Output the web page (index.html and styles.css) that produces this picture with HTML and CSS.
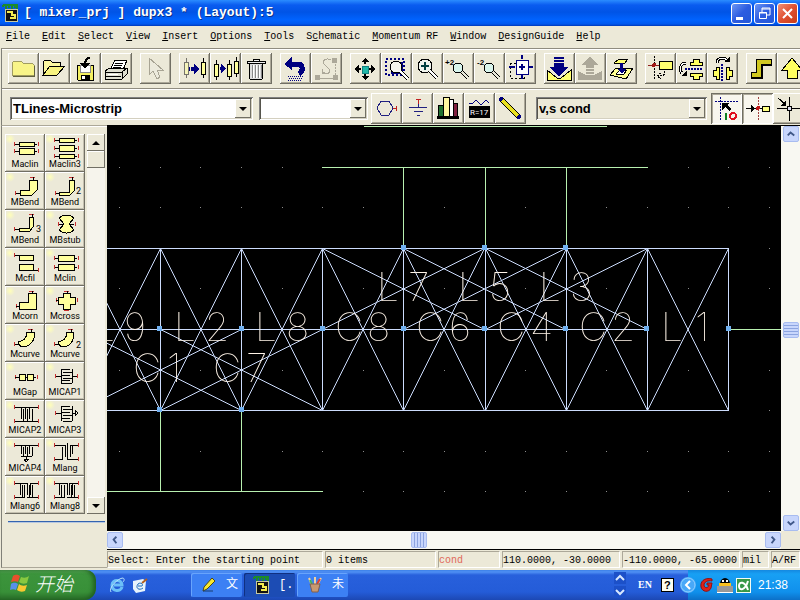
FILE: index.html
```html
<!DOCTYPE html>
<html lang="en">
<head>
<meta charset="utf-8">
<title>[ mixer_prj ] dupx3 * (Layout):5</title>
<link rel="stylesheet" href="styles.css">
</head>
<body>
<svg class="defs" aria-hidden="true">
  <defs>
    <g id="app">
      <path d="M1 1h15M1 1v2M4 1v4M7 1v3M10 1v4M13 1v3M15 1v4" stroke="#1c8a2c" stroke-width="2"/>
      <path d="M3 5h12v12H3z" fill="#111" stroke="#c8c8a0"/>
      <path d="M5 8h5v3h3v3H8" fill="none" stroke="#f4ec50" stroke-width="2"/>
    </g>
    <g id="part"><path d="M2 0v4M2 16v4" stroke="#000"/><path d="M0 4h4v12H0z" fill="#ffff9c" stroke="#000"/></g>
    <g id="lens"><circle cx="15" cy="15" r="5" fill="#d8f4ec" stroke="#000"/><path d="M19 19l6 6" stroke="#000" stroke-width="4"/><path d="M19 19l6 6" stroke="#e8e8d8" stroke-width="2"/></g>
    <g id="cross2"><path d="M0 0l81 162M0 162L81 0M0 0v162"/></g>
    <g id="wide"><path d="M0 0l162 81M0 81L162 0"/></g>
    <path id="dots" d="M119 0h1M160 0h1M200 0h1M241 0h1M282 0h1M322 0h1M363 0h1M403 0h1M444 0h1M485 0h1M525 0h1M566 0h1M606 0h1M647 0h1M688 0h1M728 0h1M769 0h1"/>
    <path id="node" d="M-3-3h5v5h-5z"/>
  </defs>
</svg>

<header class="titlebar">
  <svg width="18" height="18" viewBox="0 0 18 18" class="px"><use href="#app"/></svg>
  <h1>[ mixer_prj ] dupx3 * (Layout):5</h1>
  <div class="winbtns">
    <button type="button" aria-label="Minimize"><svg width="21" height="21" viewBox="0 0 21 21"><path d="M5 14h7v3H5z" fill="#fff"/></svg></button>
    <button type="button" aria-label="Restore"><svg width="21" height="21" viewBox="0 0 21 21" fill="none" stroke="#fff"><path d="M8 9V5h8v7h-3M8 6h8"/><path d="M5.500 9.500h7v6h-7zM5 10h8"/></svg></button>
    <button type="button" aria-label="Close" class="close"><svg width="21" height="21" viewBox="0 0 21 21"><path d="M6 6l9 9M15 6l-9 9" stroke="#fff" stroke-width="2"/></svg></button>
  </div>
</header>

<nav class="menubar" aria-label="Menu">
  <a href="#"><u>F</u>ile</a><a href="#"><u>E</u>dit</a><a href="#"><u>S</u>elect</a><a href="#"><u>V</u>iew</a><a href="#"><u>I</u>nsert</a><a href="#"><u>O</u>ptions</a><a href="#"><u>T</u>ools</a><a href="#">S<u>c</u>hematic</a><a href="#"><u>M</u>omentum RF</a><a href="#"><u>W</u>indow</a><a href="#"><u>D</u>esignGuide</a><a href="#"><u>H</u>elp</a>
</nav>

<div class="toolbar main-tools" role="toolbar" aria-label="Main tools">
  <div class="group">
    <button type="button" aria-label="New"><svg viewBox="0 0 31 31"><path d="M4 22V10l2-2h7l2 2h9l2 2v10z" fill="#f8f488" stroke="#a09c60"/><path d="M5 23h21V13" fill="none" stroke="#606040"/></svg></button>
    <button type="button" aria-label="Open"><svg viewBox="0 0 31 31"><path d="M4 21V9l2-2h5l2 2h8v4" fill="#fcf8a0" stroke="#000"/><path d="M4 22l7-9h15l-8 9z" fill="#f8f480" stroke="#000"/></svg></button>
    <button type="button" aria-label="Save"><svg viewBox="0 0 31 31"><path d="M7 12h16v15H8l-1-1z" fill="#f4f060" stroke="#000"/><path d="M10 12h10v7H10z" fill="#fff" stroke="#888"/><path d="M11 22h9v5h-9z" fill="#000"/><path d="M12 23h3v3h-3z" fill="#fff"/><path d="M20 5c-4 0-5 3-5 7" fill="none" stroke="#000" stroke-width="2"/><path d="M10 10h10l-5 6z"/></svg></button>
    <button type="button" aria-label="Print"><svg viewBox="0 0 31 31"><path d="M9 17l5-10h12l-4 10z" fill="#fff" stroke="#000"/><path d="M14 10h8M13 12h8M12 14h8" stroke="#000"/><path d="M4 18l5-3h17v6l-5 5H4z" fill="#deded0" stroke="#000"/><path d="M4 19h17l5-4M21 19v7M5 23h15" fill="none" stroke="#000"/><path d="M7 21h10" stroke="#fff"/></svg></button>
  </div>
  <div class="group">
    <button type="button" aria-label="Select"><svg viewBox="0 0 31 31"><path d="M9 5v17l4-4 4 8 3-2-3-7h6z" fill="#eceadc" stroke="#a8a494"/></svg></button>
  </div>
  <div class="group">
    <button type="button" aria-label="Move"><svg viewBox="0 0 31 31"><g opacity=".5"><use href="#part" x="5" y="5"/></g><use href="#part" x="22" y="5"/><path d="M10 14v4M12 14v4" stroke="#000080"/><path d="M13 14h2v-3l5 5-5 5v-3h-2z" fill="#000080"/></svg></button>
    <button type="button" aria-label="Copy"><svg viewBox="0 0 31 31"><use href="#part" x="4" y="7"/><use href="#part" x="17" y="7"/><use href="#part" x="24" y="4"/><path d="M10 14h1v-3l5 4-5 5v-3h-1z" fill="#000080"/></svg></button>
    <button type="button" aria-label="Delete"><svg viewBox="0 0 31 31"><path d="M8 10h14l-1 16H9z" fill="#ddd" stroke="#000"/><path d="M11 12v13M14 12v13M17 12v13M20 12v13" stroke="#888"/><path d="M12 12v13M15 12v13M18 12v13" stroke="#fff"/><path d="M6 8h18v2H6zM12 8V6h6v2" fill="#eee" stroke="#000"/></svg></button>
  </div>
  <div class="group">
    <button type="button" aria-label="Undo"><svg viewBox="0 0 31 31"><path d="M10 11h8c5 0 6 7 1 10" fill="none" stroke="#000080" stroke-width="5"/><path d="M4 11l8-7v13z" fill="#000080"/><path d="M8 23h16M9 25h14M8 27h14" stroke="#000080" stroke-dasharray="1 1"/></svg></button>
    <button type="button" aria-label="Edit path" disabled><svg viewBox="0 0 31 31"><g fill="none" stroke="#aca899"><path d="M7 25h18" stroke-width="1"/><path d="M24 8v16" stroke-dasharray="2 1"/><path d="M20 7c-6-3-10 2-6 5l4 4c2 4-2 6-6 3M11 16v4h5"/></g><path d="M4 22h5v5H4zM22 22h5v5h-5zM21 5h5v5h-5z" fill="#aca899"/></svg></button>
  </div>
  <div class="group">
    <button type="button" aria-label="Pan"><svg viewBox="0 0 31 31"><path d="M12 13h6v7h-6z" fill="#20b8a8" stroke="#108080"/><path d="M15 5l4 4h-3v2h-2V9h-3zM15 27l4-4h-3v-2h-2v2h-3zM4 16l5-4v3h2v2H9v3zM26 16l-5-4v3h-2v2h2v3z"/></svg></button>
    <button type="button" aria-label="Zoom area"><svg viewBox="0 0 31 31"><path d="M5 6h18v16H5z" fill="none" stroke="#000080" stroke-width="2" stroke-dasharray="2 2"/><path d="M10 20h11V9" fill="none" stroke="#000080" stroke-width="2"/><circle cx="15" cy="14" r="6" fill="#f4f4ec" stroke="#000"/><path d="M19 18l8 8" stroke="#000" stroke-width="4"/><path d="M19 18l8 8" stroke="#fff" stroke-width="2"/></svg></button>
    <button type="button" aria-label="Zoom in"><svg viewBox="0 0 31 31"><circle cx="13" cy="13" r="7" fill="#f0f4ec" stroke="#000"/><path d="M9 13h8M13 9v8" stroke="#004040" stroke-width="2"/><path d="M18 18l7 7" stroke="#000" stroke-width="4"/><path d="M18 18l7 7" stroke="#fff" stroke-width="2"/></svg></button>
    <button type="button" aria-label="Zoom in 2x"><svg viewBox="0 0 31 31"><text x="2" y="12" class="tiny">+2</text><use href="#lens"/></svg></button>
    <button type="button" aria-label="Zoom out 2x"><svg viewBox="0 0 31 31"><text x="3" y="12" class="tiny">-2</text><use href="#lens"/></svg></button>
    <button type="button" aria-label="Zoom to fit"><svg viewBox="0 0 31 31"><path d="M5 10h14v15H5z" fill="none" stroke="#000" stroke-dasharray="2 2"/><path d="M11 7h12v14H11z" fill="#fff" stroke="#000080" stroke-width="1"/><path d="M17 2v4M17 22v4M4 14h6M23 14h5M14 14h6M17 11v6" stroke="#000080" stroke-width="2"/></svg></button>
  </div>
  <div class="group">
    <button type="button" aria-label="Push into hierarchy"><svg viewBox="0 0 31 31"><path d="M3 17l10 8h4l10-8v10H3z" fill="#ffff70" stroke="#000"/><path d="M10 4h10v2H10zM10 7h10v2H10zM10 10h10v4h5l-10 9-10-9h5z" fill="#000080"/></svg></button>
    <button type="button" aria-label="Pop out of hierarchy" disabled><svg viewBox="0 0 31 31"><path d="M3 18l8 4h8l8-4v9H3z" fill="#aca899"/><path d="M15 4l9 8h-5v3h-8v-3H6zM11 16h8v2h-8zM11 19h8v2h-8z" fill="#aca899"/></svg></button>
    <button type="button" aria-label="Hierarchy layers"><svg viewBox="0 0 31 31"><path d="M4 22l6-7h17l-7 11z" fill="#ffff90" stroke="#000"/><path d="M10 21l4-4h7l-4 5z" fill="#fff" stroke="#000"/><path d="M8 10l5-4h9l-4 5z" fill="#ffff70" stroke="#000"/><path d="M14 10v6h-3l5 5 4-5h-3v-6z" fill="#000080"/></svg></button>
  </div>
  <div class="group">
    <button type="button" aria-label="Rotate"><svg viewBox="0 0 31 31"><path d="M9 3v24" stroke="#000" stroke-dasharray="2 1"/><path d="M3 12h11" stroke="#902020"/><path d="M14 8h13v8H14z" fill="#ffff70" stroke="#000"/><circle cx="9" cy="12" r="2" fill="#a01818"/><path d="M20 18c0 5-3 5-7 5m3-3l-4 3 4 3" fill="none" stroke="#000" stroke-dasharray="2 1"/></svg></button>
    <button type="button" aria-label="Mirror about X"><svg viewBox="0 0 31 31"><path d="M9 16h18" stroke="#000080" stroke-width="2" stroke-dasharray="2 1"/><path d="M14 12V9h3V6h6v3h3v3zM14 20v3h3v3h6v-3h3v-3z" fill="#ffff60" stroke="#000"/><path d="M10 10c-6 0-7 7-4 10" fill="none" stroke="#000" stroke-width="3"/><path d="M10 10c-6 0-7 7-4 10" fill="none" stroke="#fff"/><path d="M5 23h6v-6z"/></svg></button>
    <button type="button" aria-label="Mirror about Y"><svg viewBox="0 0 31 31"><path d="M15 11v17" stroke="#000080" stroke-width="2" stroke-dasharray="2 1"/><path d="M12 14H9v3H6v6h3v3h3zM19 14h3v3h3v6h-3v3h-3z" fill="#ffff60" stroke="#000"/><path d="M10 10c0-6 9-6 10-2" fill="none" stroke="#000" stroke-width="3"/><path d="M10 10c0-6 9-6 10-2" fill="none" stroke="#fff"/><path d="M17 9h6V4z"/></svg></button>
  </div>
  <div class="group">
    <button type="button" aria-label="Trace"><svg viewBox="0 0 31 31"><path d="M5 22h8V9h13" fill="none" stroke="#000" stroke-width="7"/><path d="M6 22h7V9h12" fill="none" stroke="#d0c820" stroke-width="4"/></svg></button>
    <button type="button" aria-label="Rectangle"><svg viewBox="0 0 31 31"><path d="M15 5l10 12h-5v8H10v-8H5z" fill="#ffff60" stroke="#000"/></svg></button>
  </div>
</div>

<div class="toolbar part-tools" role="toolbar" aria-label="Component tools">
  <label class="combo library"><select aria-label="Component library"><option>TLines-Microstrip</option></select><span class="drop"></span></label>
  <label class="combo history"><select aria-label="Component history"><option></option></select><span class="drop"></span></label>
  <div class="group">
    <button type="button" aria-label="Port"><svg viewBox="0 0 31 31"><path d="M10 8h8l4 7-4 7h-8l-4-7z" fill="none" stroke="#202080"/><path d="M22 15h4M25 13v5" stroke="#c02020"/></svg></button>
    <button type="button" aria-label="Ground"><svg viewBox="0 0 31 31"><path d="M14 6h5M16 7v4" stroke="#c02020"/><path d="M16 11v3M7 14h18M12 18h9M15 22h3" stroke="#202080"/></svg></button>
    <button type="button" aria-label="Component library list"><svg viewBox="0 0 31 31"><path d="M5 12h5v13H5z" fill="#207030" stroke="#000"/><path d="M10 4h6v20h-6z" fill="#fff8a0" stroke="#000"/><path d="M16 6h4v18h-4z" fill="#fff" stroke="#000"/><path d="M20 10h4v14h-4z" fill="#802040" stroke="#000"/><path d="M4 23h22v3H4z"/><path d="M11 9h3M17 9h2"/></svg></button>
    <button type="button" aria-label="Set value"><svg viewBox="0 0 31 31"><path d="M5 10h4l3-3 5 5 5-5 3 3" fill="none" stroke="#000080"/><path d="M5 13h21v12H5z"/><text x="6" y="22" class="value">R=17</text></svg></button>
    <button type="button" aria-label="Draw wire"><svg viewBox="0 0 31 31"><path d="M6 6l18 18" stroke="#000" stroke-width="5"/><path d="M7 7l16 16" stroke="#e8e020" stroke-width="3"/><circle cx="6" cy="6" r="2" fill="#000080"/><circle cx="24" cy="24" r="2" fill="#000080"/></svg></button>
  </div>
  <label class="combo layer"><select aria-label="Layer"><option>v,s cond</option></select><span class="drop"></span></label>
  <div class="group">
    <button type="button" aria-label="Snap enable" class="on"><svg viewBox="0 0 31 31"><path d="M4 8h23M9 4v24" stroke="#000080" stroke-dasharray="2 1"/><path d="M11 10h7l-2 2 4 4-2 2-4-4-3 3z"/><path d="M15 20v7" stroke="#108020" stroke-width="2"/><circle cx="22" cy="23" r="3" fill="none" stroke="#e01020" stroke-width="2"/></svg></button>
    <button type="button" aria-label="Pin snap" class="on"><svg viewBox="0 0 31 31"><path d="M16 4v24" stroke="#a04040" stroke-dasharray="2 1"/><path d="M4 15h16" stroke="#000"/><path d="M9 12l4 3-4 4z"/><path d="M20 13h7v5h-7z" fill="#ffff80" stroke="#000"/><circle cx="16" cy="15" r="2" fill="#c01818"/></svg></button>
    <button type="button" aria-label="Intersection snap"><svg viewBox="0 0 31 31"><path d="M4 15h27M16 4v24M5 5l7 6" stroke="#000"/><path d="M13 7v6H8z"/><path d="M14 13h4v4h-4z" fill="#dde" stroke="#000"/></svg></button>
  </div>
</div>

<main class="workspace">
  <aside class="palette">
    <div class="pal-top">
      <div class="parts">
        <button type="button"><svg viewBox="0 0 39 26"><path class="r" d="M8 8v4M32 8v4M8 15v4M32 15v4"/><path d="M9 10h22M9 17h22"/><path class="f" d="M13 8h15v4H13zM13 14h15v6H13z"/></svg>Maclin</button>
        <button type="button"><svg viewBox="0 0 39 26"><path class="r" d="M8 4v4M32 4v4M8 12v4M32 12v4M8 20v4M32 20v4"/><path d="M9 6h22M9 14h22M9 22h22"/><path class="f" d="M13 4h15v4H13zM13 11h15v6H13zM13 20h15v4H13z"/></svg>Maclin3</button>
        <button type="button"><svg viewBox="0 0 39 26"><path class="r" d="M9 19v4M24 5h5"/><path d="M10 21h4M27 5v3"/><path class="f" d="M23 8h8v10l-5 5H14v-5h9z"/></svg>MBend</button>
        <button type="button"><svg viewBox="0 0 39 26"><path class="r" d="M9 19v4M23 5h5"/><path d="M10 21h4M26 5v3"/><path class="f" d="M23 8h5v11l-4 4H13v-3h10z"/><text x="30" y="22">2</text></svg>MBend</button>
        <button type="button"><svg viewBox="0 0 39 26"><path class="r" d="M8 17v4M23 4h5"/><path d="M9 19h4M26 4v3"/><path class="f" d="M23 7h4v10l-3 4H13v-3h10z"/><text x="30" y="22">3</text></svg>MBend</button>
        <button type="button"><svg viewBox="0 0 39 26"><path class="r" d="M12 12v4M29 12v4"/><path d="M13 14h15"/><path class="f" d="M13 8c4-4 11-4 15 0l-5 6 5 6c-4 4-11 4-15 0l5-6z"/></svg>MBstub</button>
        <button type="button"><svg viewBox="0 0 39 26"><path class="r" d="M8 5v4M32 20v4"/><path d="M9 7h5M27 22h5"/><path class="f" d="M13 7h14v5H13zM13 16h14v6H13z"/></svg>Mcfil</button>
        <button type="button"><svg viewBox="0 0 39 26"><path class="r" d="M8 8v4M32 8v4M8 17v4M32 17v4"/><path d="M9 10h22M9 19h22"/><path class="f" d="M12 7h16v6H12zM12 16h16v6H12z"/></svg>Mclin</button>
        <button type="button"><svg viewBox="0 0 39 26"><path class="r" d="M10 18v4M23 5h5"/><path d="M10 20h3M26 5v3"/><path class="f" d="M22 7h8v16H13v-7h9z"/></svg>Mcorn</button>
        <button type="button"><svg viewBox="0 0 39 26"><path class="r" d="M10 12v4M31 12v4M18 5h5M18 24h5"/><path d="M10 14h20M21 5v19"/><path class="f" d="M17 7h7v4h5v7h-5v5h-7v-5h-5v-7h5z"/></svg>Mcross</button>
        <button type="button"><svg viewBox="0 0 39 26"><path class="r" d="M8 18v4M22 5h5"/><path d="M9 20h4M25 5v3"/><path class="f" d="M21 8h8c0 9-5 15-14 15l-3-5c6-1 9-4 9-10z"/></svg>Mcurve</button>
        <button type="button"><svg viewBox="0 0 39 26"><path class="r" d="M8 18v4M22 5h5"/><path d="M9 20h4M25 5v3"/><path class="f" d="M21 8h7c0 9-4 15-13 15l-3-5c6-1 9-4 9-10z"/><text x="30" y="24">2</text></svg>Mcurve</button>
        <button type="button"><svg viewBox="0 0 39 26"><path class="r" d="M9 13v4M31 13v4"/><path d="M9 15h21"/><path class="f" d="M13 12h6v6h-6zM21 12h6v6h-6z"/></svg>MGap</button>
        <button type="button"><svg viewBox="0 0 39 26"><path class="r" d="M9 12v4M31 12v4"/><path d="M10 14h5M26 14h5M15 7v14M26 7v14M15 7h9M17 10h9M15 13h9M17 16h9M15 21h11M15 18h9"/></svg>MICAP1</button>
        <button type="button"><svg viewBox="0 0 39 26"><path class="r" d="M8 5v4M32 5v4M8 19v4M32 19v4"/><path d="M9 7h23M9 21h23M15 7v12M17 9v12M19 7v12M21 9v12M23 7v12M26 9v12"/></svg>MICAP2</button>
        <button type="button"><svg viewBox="0 0 39 26"><path class="r" d="M9 11v4"/><path d="M10 13h5M15 6v15M26 6v15M15 6h9M17 9h9M15 12h9M17 15h9M15 18h9M17 21h9M26 13h3"/><path d="M29 10v6l3-3z" fill="none"/></svg>MICAP3</button>
        <button type="button"><svg viewBox="0 0 39 26"><path class="r" d="M8 5v4M32 5v4"/><path d="M9 7h23M15 7v9M17 9v9M19 7v9M21 9v9M23 7v9M26 9v9M15 18h11M20 18v4"/><path d="M18 21h5l-3 3z" fill="none"/></svg>MICAP4</button>
        <button type="button"><svg viewBox="0 0 39 26"><path class="r" d="M8 5v4M32 5v4M8 19v4M32 19v4"/><path d="M9 7h10v12M32 7h-8v12M16 9v12H9M21 5v16h11M26 7v9"/></svg>Mlang</button>
        <button type="button"><svg viewBox="0 0 39 26"><path class="r" d="M8 5v4M32 5v4M8 19v4M32 19v4"/><path d="M9 7h12v12M32 7h-8v12M18 9v12H9M26 9v12h6M14 7v12M16 9v12M21 21h5M23 9v12"/></svg>Mlang6</button>
        <button type="button"><svg viewBox="0 0 39 26"><path class="r" d="M8 5v4M32 5v4M8 19v4M32 19v4"/><path d="M9 7h12v12M32 7h-9v12M18 9v12H9M28 9v12h4M13 7v12M15 9v12M21 21h7M25 9v12M26 7v12"/></svg>Mlang8</button>
      </div>
      <div class="oldscroll">
        <button type="button" aria-label="Palette up"><i class="tri up"></i></button>
        <span class="oldthumb"></span>
        <button type="button" aria-label="Palette down"><i class="tri"></i></button>
      </div>
    </div>
    <hr>
  </aside>

  <section class="editor">
    <div class="view">
      <svg class="drawing" role="img" aria-label="Mixer layout">
        <g transform="translate(-107 -126)">
          <g class="grid">
            <use href="#dots" y="167.500"/><use href="#dots" y="207.500"/><use href="#dots" y="248.500"/><use href="#dots" y="288.500"/><use href="#dots" y="329.500"/><use href="#dots" y="370.500"/><use href="#dots" y="410.500"/><use href="#dots" y="451.500"/><use href="#dots" y="491.500"/>
          </g>
          <path class="green" d="M364 126.500h243M322 167.500h326M403.500 168v80M485.500 168v80M566.500 168v80M160.500 411v80M241.500 411v80M107 491.500h216M729 329.500h60"/>
          <g class="lines">
            <path d="M79 248.500h650M79 410.500h650M79 329.500h568M728.500 248v162"/>
            <use href="#cross2" x="79.500" y="248.500"/><use href="#cross2" x="160.500" y="248.500"/><use href="#cross2" x="241.500" y="248.500"/><use href="#cross2" x="322.500" y="248.500"/><use href="#cross2" x="403.500" y="248.500"/><use href="#cross2" x="485.500" y="248.500"/><use href="#cross2" x="566.500" y="248.500"/><use href="#cross2" x="647.500" y="248.500"/>
            <use href="#wide" x="322.500" y="248.500"/><use href="#wide" x="403.500" y="248.500"/><use href="#wide" x="485.500" y="248.500"/>
            <use href="#wide" x="79.500" y="329.500"/><use href="#wide" x="160.500" y="329.500"/>
          </g>
          <g class="labels">
            <text x="377 408" y="301">L7</text><text x="458 489" y="301">L5</text><text x="539 570" y="301">L3</text>
            <text x="93 124" y="341">L9</text><text x="174 205" y="341">L2</text><text x="255 286" y="341">L8</text>
            <text x="335 367" y="341">C8</text><text x="416 449" y="341">C6</text><text x="497 530" y="341">C4</text><text x="579 611" y="341">C2</text><text x="661 695" y="341">L1</text>
            <text x="133 167" y="382">C1</text><text x="213 246" y="382">C7</text>
          </g>
          <g class="nodes">
            <use href="#node" x="404" y="248"/><use href="#node" x="485" y="248"/><use href="#node" x="566" y="248"/>
            <use href="#node" x="160" y="329"/><use href="#node" x="242" y="329"/><use href="#node" x="323" y="329"/><use href="#node" x="404" y="329"/><use href="#node" x="485" y="329"/><use href="#node" x="566" y="329"/><use href="#node" x="647" y="329"/><use href="#node" x="729" y="329"/>
            <use href="#node" x="160" y="410"/><use href="#node" x="242" y="410"/>
          </g>
        </g>
      </svg>
      <div class="scroll vertical">
        <button type="button" aria-label="Scroll up"><svg viewBox="0 0 15 15"><path d="M4 9l3-3 4 3"/></svg></button>
        <span class="thumb"></span>
        <button type="button" aria-label="Scroll down"><svg viewBox="0 0 15 15"><path d="M4 6l3 3 4-3"/></svg></button>
      </div>
      <div class="scroll horizontal">
        <button type="button" aria-label="Scroll left"><svg viewBox="0 0 15 15"><path d="M9 4L6 7l3 4"/></svg></button>
        <span class="thumb"></span>
        <button type="button" aria-label="Scroll right"><svg viewBox="0 0 15 15"><path d="M6 4l3 3-3 4"/></svg></button>
      </div>
      <span class="corner"></span>
    </div>
    <div class="status">
      <span>Select: Enter the starting point</span><span>0 items</span><span class="cond">cond</span><span>110.0000, -30.0000</span><span>-110.0000, -65.0000</span><span>mil</span><span>A/RF</span>
    </div>
  </section>
</main>

<footer class="taskbar">
  <button type="button" class="start"><svg width="20" height="20" viewBox="0 0 20 20"><path d="M3 3c3-2 5-1 7 0L8 9C6 8 4 8 1 9z" fill="#e8502c"/><path d="M11 4c3 1 5 1 8-1l-2 7c-3 1-5 1-8-1z" fill="#88c840"/><path d="M1 11c3-2 5-1 7 0l-2 6c-2-1-4-1-6 0z" fill="#5890e8"/><path d="M9 11c2 2 5 2 8 1l-2 6c-3 1-5 1-8-1z" fill="#f8c830"/></svg>开始</button>
  <div class="quick">
    <a href="#" aria-label="Internet Explorer"><svg width="16" height="16" viewBox="0 0 16 16"><path d="M13 10c-1 5-10 5-10-2 0-6 10-6 10 0H5" fill="none" stroke="#6cc0f8" stroke-width="3"/><path d="M2 15C-1 11 9 1 14 1c2 1 1 3 0 4" fill="none" stroke="#b8e4fc"/></svg></a>
    <a href="#" aria-label="Outlook Express"><svg width="16" height="16" viewBox="0 0 16 16"><path d="M1 4l10-2 3 2-1 10-9 2-3-4z" fill="#e8f4fc"/><path d="M11 11c-4 3-8 0-5-4 2-2 6 0 4 2H6" fill="none" stroke="#1868b8" stroke-width="1"/><path d="M10 6l5-4" stroke="#b06020" stroke-width="2"/></svg></a>
  </div>
  <div class="tasks">
    <button type="button"><svg width="18" height="18" viewBox="0 0 18 18"><path d="M3 15l1-4 8-9 3 3-8 8z" fill="#f8e830" stroke="#504810"/><path d="M3 15h10" stroke="#183c70"/></svg>文</button>
    <button type="button" class="active"><svg width="18" height="18" viewBox="0 0 18 18" class="px"><use href="#app"/></svg>[.</button>
    <button type="button"><svg width="18" height="18" viewBox="0 0 18 18"><path d="M6 9L3 2M9 9V1M11 9l4-7" stroke="#f0d0a0" stroke-width="2"/><path d="M6 8L4 4" stroke="#40b060" stroke-width="2"/><path d="M11 8l3-5" stroke="#e04030" stroke-width="2"/><path d="M4 8h10l-2 8H6z" fill="#c89870" stroke="#806050"/></svg>未</button>
  </div>
  <div class="updown">
    <button type="button" aria-label="Previous tasks"><svg width="12" height="12" viewBox="0 0 12 12"><path d="M2 8l4-4 4 4"/></svg></button>
    <button type="button" aria-label="Next tasks"><svg width="12" height="12" viewBox="0 0 12 12"><path d="M2 4l4 4 4-4"/></svg></button>
  </div>
  <span class="lang">EN</span>
  <button type="button" class="help">?</button>
  <div class="tray">
    <button type="button" aria-label="Hide icons" class="hide"><svg width="17" height="17" viewBox="0 0 17 17"><circle cx="8" cy="8" r="8" fill="#48a8f8"/><circle cx="8" cy="8" r="7" fill="none" stroke="#90d0ff"/><path d="M10 4L6 8l4 4" fill="none" stroke="#fff" stroke-width="2"/></svg></button>
    <svg width="14" height="16" viewBox="0 0 14 16"><path d="M12 2C4 0 0 5 1 10c1 5 8 6 10 1l1-5H7v2h2c-1 4-5 3-5 0s4-5 8-4z" fill="#e02018" stroke="#901010"/></svg>
    <svg width="16" height="16" viewBox="0 0 16 16"><path d="M3 7a5 6 0 0 1 10 0z"/><path d="M5 4h2M9 4h2" stroke="#fff" stroke-width="2"/><path d="M2 6h12v3H2z" fill="#f8c020"/><path d="M0 9h16v7H0z" fill="#fff"/><path d="M0 10h16M0 12h16M0 14h16" stroke="#333"/></svg>
    <svg width="15" height="15" viewBox="0 0 15 15"><path d="M0 0h15v15H0z" fill="#f4fcf4"/><path d="M1 1h13v13H1z" fill="#389848"/><path d="M12 3C9 13 3 13 3 8s6-5 9 4" fill="none" stroke="#fff" stroke-width="2"/></svg>
    <time>21:38</time>
  </div>
</footer>
</body>
</html>
```
FILE: styles.css
```css
* { box-sizing: border-box; }

html, body { height: 100%; }

body {
  margin: 0;
  display: flex;
  flex-direction: column;
  overflow: hidden;
  background: #ece9d8;
  color: #000;
  font: 10px/14px "Liberation Mono", "Noto Sans CJK SC", monospace;
}

button {
  padding: 0;
  border: 0;
  background: none;
  color: inherit;
  font: inherit;
}

svg { display: block; flex: none; }
.px { shape-rendering: crispEdges; }
.defs { position: absolute; width: 0; height: 0; }

/* Title bar */
.titlebar {
  display: flex;
  align-items: center;
  flex: none;
  height: 26px;
  padding: 0 2px;
  background: linear-gradient(#2b8cff 0, #0a5cf0 5px, #0054e6 12px, #0063ff 20px, #0058ee 24px, #0038b8);
}

.titlebar h1 {
  flex: 1;
  margin: 0 0 0 4px;
  color: #fff;
  font: bold 13px/20px "Liberation Mono", monospace;
  text-shadow: 1px 1px #0a2f88;
  white-space: nowrap;
}

.winbtns { display: flex; gap: 2px; }

.winbtns button {
  width: 21px;
  height: 21px;
  border: 1px solid #fff;
  border-radius: 3px;
  background: linear-gradient(135deg, #6c96f4, #2c5ce0 50%, #2458d8);
}

.winbtns svg { margin: -1px; }
.winbtns .close { background: linear-gradient(135deg, #f09078, #e05030 50%, #c83c18); }

/* Menus */
.menubar {
  display: flex;
  flex: none;
  gap: 12px;
  height: 22px;
  padding: 4px 6px 0;
}

.menubar a { color: #000; text-decoration: none; white-space: nowrap; }

/* Toolbars */
.toolbar {
  display: flex;
  flex: none;
  margin-left: 1px;
  border-left: 1px solid #808078;
  border-top: 1px solid #908c80;
  box-shadow: inset 0 1px #fff;
  overflow: hidden;
}

.main-tools { gap: 8px; height: 40px; padding: 4px 0 0 6px; }
.part-tools { height: 37px; padding: 4px 0 0 8px; }
.group { display: flex; flex: none; }

.toolbar button {
  width: 31px;
  height: 31px;
  box-shadow: inset -1px -1px #716f64, inset 1px 1px #fff, inset -2px -2px #aca899;
}

.toolbar button.on {
  background: #f8f6ee;
  box-shadow: inset 1px 1px #716f64, inset -1px -1px #fff, inset 2px 2px #aca899;
}

.toolbar svg {
  width: 31px;
  height: 31px;
  shape-rendering: crispEdges;
}

.tiny { font: bold 8px "Liberation Sans", sans-serif; }
.value { font: 8px Roboto, sans-serif; fill: #fff; }

.combo {
  display: flex;
  height: 23px;
  margin-top: 4px;
  padding: 2px;
  background: #fff;
  box-shadow: inset 1px 1px #808080, inset -1px -1px #fff, inset 2px 2px #55544c, inset -2px -2px #d4d0c0;
}

.combo select {
  flex: 1;
  min-width: 0;
  padding: 0 1px;
  border: 0;
  appearance: none;
  background: transparent;
  color: #000;
  font: bold 13px/18px "Liberation Sans", sans-serif;
}

.library { flex: 0 0 243px; margin-right: 6px; }
.history { flex: 0 0 109px; margin-right: 3px; }
.layer { flex: 0 0 171px; margin: 4px 4px 0 10px; background: #ece9d8; }

.drop {
  display: flex;
  align-items: center;
  justify-content: center;
  width: 16px;
  background: #ece9d8;
  box-shadow: inset -1px -1px #716f64, inset 1px 1px #fff;
  pointer-events: none;
}

.drop::after, .tri {
  content: "";
  border: 4px solid transparent;
  border-top-color: #000;
  border-bottom: 0;
}

.tri.up { border-top: 0; border-bottom: 4px solid #000; }

/* Workspace */
.workspace { display: flex; flex: 1; min-height: 0; }

.palette {
  flex: 0 0 106px;
  margin: 0 0 2px 1px;
  padding: 8px 2px 0 3px;
  border-left: 1px solid #808078;
  border-top: 1px solid #aca899;
  border-bottom: 1px solid #aca899;
  box-shadow: inset 0 1px #fff;
}

.pal-top { display: flex; gap: 2px; }
.parts { display: grid; grid-template-columns: 40px 40px; grid-auto-rows: 38px; }

.parts button {
  display: flex;
  flex-direction: column;
  align-items: center;
  background: radial-gradient(circle at 5px 5px, #ffffb8 0, #ece9d8 5px);
  box-shadow: inset -1px -1px #716f64, inset 1px 1px #fff, inset -2px -2px #c4c0b0;
  font: 9px/9px Roboto, sans-serif;
}

.parts svg {
  width: 39px;
  height: 26px;
  fill: none;
  stroke: #000;
  shape-rendering: crispEdges;
}

.parts .f { fill: #ffff9c; }
.parts .r { stroke: #c83030; }
.parts text { fill: #000; stroke: none; font: 9px Roboto, sans-serif; }

.oldscroll {
  display: flex;
  flex-direction: column;
  flex: 1;
  background: #f6f4ec;
}

.oldscroll button, .oldthumb {
  display: flex;
  align-items: center;
  justify-content: center;
  height: 17px;
  background: #ece9d8;
  box-shadow: inset -1px -1px #716f64, inset 1px 1px #fff;
}

.oldscroll button:last-child { margin-top: auto; }

.palette hr {
  height: 1px;
  margin: 7px 0 0 3px;
  border: 0;
  background: #3464b0;
  box-shadow: 0 1px #b8c8e0;
}

.editor { display: flex; flex: 1; flex-direction: column; min-width: 0; }

.view {
  display: grid;
  flex: 1;
  grid-template: minmax(0, 1fr) 18px / minmax(0, 1fr) 19px;
  min-height: 0;
  border-top: 1px solid #000;
  border-bottom: 1px solid #000;
}

.drawing { width: 100%; height: 100%; background: #000; overflow: hidden; }
.drawing path { shape-rendering: crispEdges; }
.grid { stroke: #8c8c8c; }
.green { stroke: #b8f0b0; }
.lines { fill: none; stroke: #ccdcfc; }
.labels { fill: #fff4e8; font: 100 39px Inter, sans-serif; will-change: transform; }
.nodes { fill: #70b0f0; }

.scroll { display: flex; justify-content: space-between; background: #f8f8f2; }
.vertical { flex-direction: column; padding: 0 2px; }
.horizontal { padding: 1px 0; }

.scroll button, .thumb {
  width: 16px;
  height: 16px;
  border: 1px solid #a8bcf0;
  border-radius: 2px;
  background: #c8d6fc;
}

.scroll svg { width: 14px; height: 14px; fill: none; stroke: #405888; stroke-width: 2; }
.horizontal .thumb { margin-right: 50px; background: repeating-linear-gradient(90deg, #c8d6fc 0 2px, #8ca4e0 2px 3px); }
.vertical .thumb { margin-top: 2px; background: repeating-linear-gradient(#c8d6fc 0 2px, #8ca4e0 2px 3px); }
.corner { background: #ece9d8; }

/* Status line */
.status {
  display: grid;
  flex: none;
  grid-template-columns: 216fr 111fr 62fr 118fr 118fr 27fr 29fr;
  gap: 2px;
  height: 20px;
  padding: 1px 0 2px;
  line-height: 18px;
}

.status span {
  border: 1px solid;
  border-color: #aca899 #fff #fff #aca899;
  white-space: nowrap;
  overflow: hidden;
}

.status .cond { color: #e06858; }

/* Taskbar */
.taskbar {
  display: flex;
  align-items: center;
  flex: none;
  height: 30px;
  background: linear-gradient(#3c80e8 0, #5090f4 2px, #2860dc 5px, #245cd8 22px, #1c48b4);
  color: #fff;
}

.start {
  display: flex;
  align-items: center;
  gap: 5px;
  width: 96px;
  height: 30px;
  padding: 0 0 4px 10px;
  border-radius: 0 10px 12px 0;
  background: linear-gradient(#58a858 0, #3c943c 4px, #389038 22px, #286c28);
  box-shadow: inset -3px 0 4px #206020;
  font: italic 300 19px/24px "Noto Sans CJK SC", sans-serif;
}

.quick { display: flex; gap: 7px; width: 95px; padding-left: 13px; }
.tasks { display: flex; gap: 2px; flex: 1; }

.tasks button {
  display: flex;
  align-items: center;
  gap: 8px;
  width: 51px;
  height: 24px;
  padding-left: 9px;
  border-radius: 2px;
  background: #3c80f4;
  box-shadow: inset 1px 1px #68a4fc;
  font: 12px/16px "Liberation Mono", "Noto Sans CJK SC", monospace;
}

.tasks .active { background: #1c4cb4; box-shadow: inset 1px 1px #103080; }

.updown { display: flex; flex-direction: column; gap: 2px; margin-right: 12px; }
.updown button { background: #1c50c8; }
.updown svg { fill: none; stroke: #d8e8ff; stroke-width: 2; }

.lang { margin-right: 9px; font: bold 10px/14px "Liberation Serif", serif; }

.help {
  width: 13px;
  height: 14px;
  border: 1px solid #000;
  background: #fffff0;
  color: #000;
  font: bold 11px/12px "Liberation Sans", sans-serif;
}

.tray {
  display: flex;
  align-items: center;
  gap: 3px;
  height: 30px;
  margin-left: 14px;
  padding-right: 12px;
  background: linear-gradient(#1488e0 0, #18a0f4 4px, #1090ec 22px, #0c70c8);
}

.hide { margin-left: -8px; }
.tray time { margin-left: 4px; font: 12px/16px "Liberation Sans", sans-serif; }
```
